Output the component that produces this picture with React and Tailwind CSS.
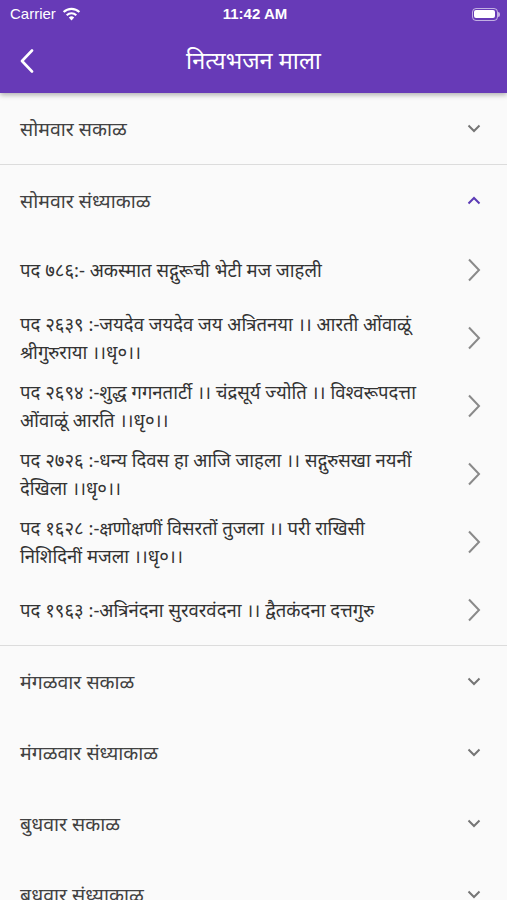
import React from 'react';

const FONT = { fontFamily: '"Noto Sans", "Noto Sans Devanagari", "Liberation Sans", sans-serif' };
const SYS = { fontFamily: '"Liberation Sans", sans-serif' };

const collapsedTop = ['सोमवार सकाळ'];
const collapsedBottom = ['मंगळवार सकाळ', 'मंगळवार संध्याकाळ', 'बुधवार सकाळ', 'बुधवार संध्याकाळ'];

const padItems = [
  'पद ७८६:- अकस्मात सद्गुरूची भेटी मज जाहली',
  'पद २६३९ :-जयदेव जयदेव जय अत्रितनया ।। आरती ओंवाळूं श्रीगुरुराया ।।धृ०।।',
  'पद २६९४ :-शुद्ध गगनतार्टी ।। चंद्रसूर्य ज्योति ।। विश्वरूपदत्ता ओंवाळूं आरति ।।धृ०।।',
  'पद २७२६ :-धन्य दिवस हा आजि जाहला ।। सद्गुरुसखा नयनीं देखिला ।।धृ०।।',
  'पद १६२८ :-क्षणोक्षणीं विसरतों तुजला ।। परी राखिसी निशिदिनीं मजला ।।धृ०।।',
  'पद १९६३ :-अत्रिनंदना सुरवरवंदना ।। द्वैतकंदना दत्तगुरु',
];

const ChevronDown = ({ up }) => (
  <svg width="14" height="9" viewBox="0 0 14 9" fill="none">
    <path
      d={up ? 'M1.5 7.5 L7 2 L12.5 7.5' : 'M1.5 1.5 L7 7 L12.5 1.5'}
      stroke={up ? '#5b3bb5' : '#757575'}
      strokeWidth="2"
    />
  </svg>
);

const ChevronRight = () => (
  <svg width="14" height="24" viewBox="0 0 14 24" fill="none">
    <path d="M2 1.5 L12 12 L2 22.5" stroke="#8a8a8a" strokeWidth="2" />
  </svg>
);

const SectionRow = ({ title, open }) => (
  <div className="flex items-center justify-between h-[71px] pl-5 pr-[26px]">
    <span className="text-[19.5px] text-[#424242]">{title}</span>
    <ChevronDown up={open} />
  </div>
);

const App = () => {
  return (
    <div className="w-[507px] h-[900px] overflow-hidden bg-[#fafafa]" style={FONT}>
      {/* Header */}
      <div className="bg-[#673ab7] h-[93px] shadow-[0_2px_5px_rgba(0,0,0,0.3)] relative z-10">
        <div className="grid grid-cols-3 items-center h-[28px] pl-[10px] pr-[7px] text-white" style={SYS}>
          <div className="flex items-center gap-[6px] text-[15px]">
            <span>Carrier</span>
            <svg width="19" height="14" viewBox="0 0 19 14">
              <path d="M9.5 13.5 L12.2 10.6 A3.9 3.9 0 0 0 6.8 10.6 Z" fill="white" />
              <path d="M4.7 8.2 A6.9 6.9 0 0 1 14.3 8.2" stroke="white" strokeWidth="2.1" fill="none" />
              <path d="M1.6 5.1 A11.2 11.2 0 0 1 17.4 5.1" stroke="white" strokeWidth="2.1" fill="none" />
            </svg>
          </div>
          <span className="text-[15px] font-bold text-center">11:42 AM</span>
          <div className="flex items-center justify-end">
            <div className="w-[26px] h-[13px] rounded-[4px] border border-white/60 p-[1.5px]">
              <div className="w-full h-full bg-white rounded-[2px]" />
            </div>
            <div className="w-[2px] h-[5px] bg-white/60 rounded-r-sm" />
          </div>
        </div>
        <div className="flex items-center h-[65px] relative">
          <div className="pl-[20px]">
            <svg width="14" height="24" viewBox="0 0 14 24" fill="none">
              <path d="M12 1.5 L2 12 L12 22.5" stroke="white" strokeWidth="2.6" strokeLinecap="round" strokeLinejoin="round" />
            </svg>
          </div>
          <span className="absolute left-0 right-0 text-center text-white text-[23.5px] pointer-events-none">नित्यभजन माला</span>
        </div>
      </div>

      {/* List */}
      <div>
        {collapsedTop.map((t) => (
          <SectionRow key={t} title={t} />
        ))}
        <div className="border-t border-b border-[#dcdcdc]">
          <SectionRow title="सोमवार संध्याकाळ" open />
          <div className="pb-[1px]">
            {padItems.map((p) => (
              <div key={p} className="flex items-center justify-between h-[68px] pl-5 pr-[26px]">
                <p className="text-[18.5px] leading-[28px] text-[#333] max-w-[409px]">{p}</p>
                <div className="shrink-0">
                  <ChevronRight />
                </div>
              </div>
            ))}
          </div>
        </div>
        {collapsedBottom.map((t) => (
          <SectionRow key={t} title={t} />
        ))}
      </div>
    </div>
  );
};

export default App;
